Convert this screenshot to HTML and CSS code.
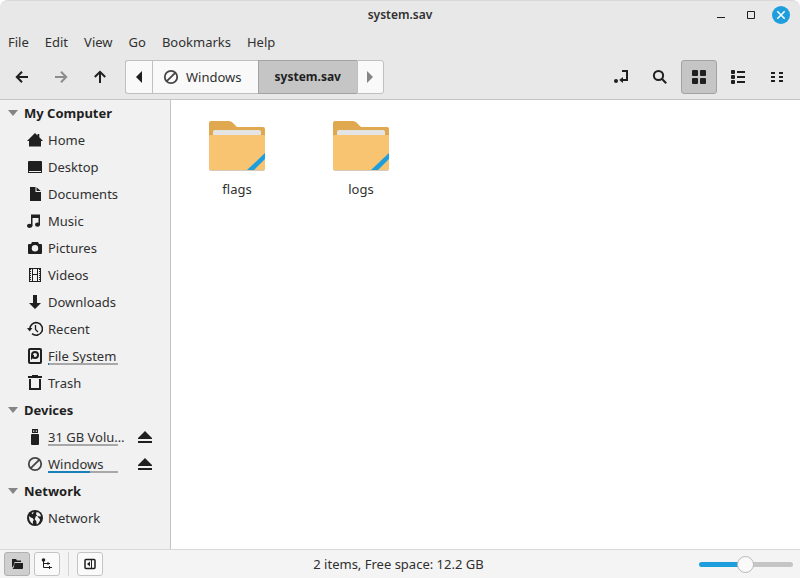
FILE: index.html
```html
<!DOCTYPE html>
<html lang="en">
<head>
<meta charset="utf-8">
<title>system.sav</title>
<link rel="stylesheet" href="styles.css">
</head>
<body>
<div class="window">
  <header class="chrome">
    <div class="titlebar">
      <h1 class="title">system.sav</h1>
      <div class="window-buttons">
        <button class="window-button" aria-label="Minimize"><svg width="18" height="18"><path d="M5 11.5h8" stroke="#1f1f1f"/></svg></button>
        <button class="window-button" aria-label="Maximize"><svg width="18" height="18"><path d="M5.500 5.500h7v7h-7z" stroke="#1f1f1f" fill="none"/></svg></button>
        <button class="window-button" aria-label="Close"><svg width="18" height="18"><circle cx="9" cy="9" r="9" fill="#1f9ede"/><path d="M5.300 5.300l7.400 7.400M12.700 5.300l-7.400 7.400" stroke="#fff" stroke-width="1.500"/></svg></button>
      </div>
    </div>
    <nav class="menubar">
      <button class="menu">File</button>
      <button class="menu">Edit</button>
      <button class="menu">View</button>
      <button class="menu">Go</button>
      <button class="menu">Bookmarks</button>
      <button class="menu">Help</button>
    </nav>
    <div class="toolbar">
      <button class="tool" aria-label="Back"><svg class="icon" viewBox="0 0 16 16"><path d="M14 8H3.500M8 2.800L2.800 8L8 13.200" fill="none" stroke="#1f1f1f" stroke-width="2"/></svg></button>
      <button class="tool" aria-label="Forward" disabled><svg class="icon" viewBox="0 0 16 16"><path d="M2 8h10.500M8 2.800L13.200 8L8 13.200" fill="none" stroke="#8c8c8c" stroke-width="2"/></svg></button>
      <button class="tool" aria-label="Up"><svg class="icon" viewBox="0 0 16 16"><path d="M8 14V3.500M2.800 8L8 2.800L13.200 8" fill="none" stroke="#1f1f1f" stroke-width="2"/></svg></button>
      <div class="pathbar">
        <button class="crumb crumb-arrow" aria-label="Scroll left"><svg class="icon" viewBox="0 0 16 16"><path d="M11 2v12L5 8z" fill="#1f1f1f"/></svg></button>
        <button class="crumb"><svg class="icon" viewBox="0 0 16 16"><circle cx="8" cy="8" r="6.200" fill="none" stroke="#454545" stroke-width="1.800"/><path d="M12.200 3.800L3.800 12.200" stroke="#454545" stroke-width="1.800"/></svg>Windows</button>
        <button class="crumb crumb-current">system.sav</button>
        <button class="crumb crumb-arrow" aria-label="Scroll right"><svg class="icon" viewBox="0 0 16 16"><path d="M5 2v12l6-6z" fill="#858585"/></svg></button>
      </div>
      <div class="view-tools">
        <button class="tool" aria-label="Toggle location entry"><svg class="icon" viewBox="0 0 16 16"><path d="M9 2h5v9H8.500" fill="none" stroke="#1f1f1f" stroke-width="2"/><path d="M10 8v6L6.200 11z" fill="#1f1f1f"/><circle cx="3" cy="12" r="2" fill="#1f1f1f"/></svg></button>
        <button class="tool" aria-label="Search"><svg class="icon" viewBox="0 0 16 16"><circle cx="6.500" cy="6.500" r="4.600" fill="none" stroke="#1f1f1f" stroke-width="2"/><path d="M9.800 9.800l4.400 4.400" stroke="#1f1f1f" stroke-width="2"/></svg></button>
        <button class="tool tool-active" aria-label="Icon view"><svg class="icon" viewBox="0 0 16 16" fill="#1f1f1f"><rect x="1" y="1" width="6" height="6" rx="1"/><rect x="9" y="1" width="6" height="6" rx="1"/><rect x="1" y="9" width="6" height="6" rx="1"/><rect x="9" y="9" width="6" height="6" rx="1"/></svg></button>
        <button class="tool" aria-label="List view"><svg class="icon" viewBox="0 0 16 16" fill="#1f1f1f"><rect x="1" y="1" width="4" height="4" rx="1"/><rect x="1" y="6" width="4" height="4" rx="1"/><rect x="1" y="11" width="4" height="4" rx="1"/><path d="M7 2h8v2H7zM7 7h8v2H7zM7 12h8v2H7z"/></svg></button>
        <button class="tool" aria-label="Compact view"><svg class="icon" viewBox="0 0 16 16"><path d="M2 4h4M10 4h4M2 8h4M10 8h4M2 12h4M10 12h4" stroke="#1f1f1f" stroke-width="2"/></svg></button>
      </div>
    </div>
  </header>

  <div class="main">
    <aside class="sidebar">
      <h2 class="section"><svg class="expander" viewBox="0 0 10 6"><path d="M0 0h10L5 6z" fill="#858585"/></svg>My Computer</h2>
      <a class="place" href="#"><svg class="icon" viewBox="0 0 16 16"><path d="M8 1l2.500 2.500V2h1.800v3.300L16 9h-2v5.500H2V9H0z" fill="#1f1f1f"/></svg><span class="place-name">Home</span></a>
      <a class="place" href="#"><svg class="icon" viewBox="0 0 16 16"><path fill-rule="evenodd" d="M2 2h12q1 0 1 1v11H1V3q0-1 1-1zM2 12v1h12v-1z" fill="#1f1f1f"/></svg><span class="place-name">Desktop</span></a>
      <a class="place" href="#"><svg class="icon" viewBox="0 0 16 16"><path d="M3 1h5.500v5H14v9H3zM9.500 1.200L13.800 5H9.500z" fill="#1f1f1f"/></svg><span class="place-name">Documents</span></a>
      <a class="place" href="#"><svg class="icon" viewBox="0 0 16 16" fill="#1f1f1f"><path d="M4 1.500h9V12h-1.500V5h-6v8H4z"/><ellipse cx="2.700" cy="12.800" rx="2.700" ry="2.100"/><ellipse cx="10.500" cy="11.700" rx="2.500" ry="2.100"/></svg><span class="place-name">Music</span></a>
      <a class="place" href="#"><svg class="icon" viewBox="0 0 16 16"><path d="M5 2h6l1 2h2q1 0 1 1v8q0 1-1 1H2q-1 0-1-1V5q0-1 1-1h2z" fill="#1f1f1f"/><circle cx="8" cy="8.300" r="3.200" fill="#f1f1f1"/></svg><span class="place-name">Pictures</span></a>
      <a class="place" href="#"><svg class="icon" viewBox="0 0 16 16" fill="none" stroke="#1f1f1f"><path d="M2.500 1v14M13.500 1v14M5.500 1v14M10.500 1v14M2 1.500h12M5 7.500h6M2 14.500h12"/><path d="M3.500 2v12M12.500 2v12" stroke-dasharray="1 1"/></svg><span class="place-name">Videos</span></a>
      <a class="place" href="#"><svg class="icon" viewBox="0 0 16 16"><path d="M6 1h4v8h4l-6 6-6-6h4z" fill="#1f1f1f"/></svg><span class="place-name">Downloads</span></a>
      <a class="place" href="#"><svg class="icon" viewBox="0 0 16 16"><path d="M2.800 8A6.300 6.300 0 1 1 5 12.700" fill="none" stroke="#1f1f1f" stroke-width="1.600"/><path d="M0 7h5.400L2.700 10.500z" fill="#1f1f1f"/><path d="M8.500 4v4.500l2.500 2.500" fill="none" stroke="#1f1f1f" stroke-width="1.300"/></svg><span class="place-name">Recent</span></a>
      <a class="place" href="#"><svg class="icon" viewBox="0 0 16 16"><rect x="2" y="1" width="12" height="14" rx="1" fill="none" stroke="#1f1f1f" stroke-width="2"/><circle cx="8" cy="7" r="3" fill="none" stroke="#1f1f1f" stroke-width="2"/><path d="M4 7h3v2l-3 3z" fill="#1f1f1f"/></svg><span class="place-name">File System<span class="usage"><span class="usage-fill" style="width:2%"></span></span></span></a>
      <a class="place" href="#"><svg class="icon" viewBox="0 0 16 16"><path d="M1 1h4V0h6v1h4v2H1z" fill="#1f1f1f"/><path d="M3 4v10h10V4" fill="none" stroke="#1f1f1f" stroke-width="2"/></svg><span class="place-name">Trash</span></a>

      <h2 class="section"><svg class="expander" viewBox="0 0 10 6"><path d="M0 0h10L5 6z" fill="#858585"/></svg>Devices</h2>
      <div class="device">
        <a class="place" href="#"><svg class="icon" viewBox="0 0 16 16" fill="#1f1f1f"><path fill-rule="evenodd" d="M5 0h6v4H5zM6 1.500v1.200h1.300V1.500zM8.700 1.500v1.200H10V1.500z"/><rect x="4" y="5" width="8" height="11" rx="1"/></svg><span class="place-name">31 GB Volu…<span class="usage"></span></span></a>
        <button class="eject" aria-label="Eject 31 GB Volume"><svg class="icon" viewBox="0 0 16 16"><path d="M8 2l7 7v1H1V9zM1 12h14v2H1z" fill="#1f1f1f"/></svg></button>
      </div>
      <div class="device">
        <a class="place" href="#"><svg class="icon" viewBox="0 0 16 16"><circle cx="8" cy="8" r="6.200" fill="none" stroke="#454545" stroke-width="1.800"/><path d="M12.200 3.800L3.800 12.200" stroke="#454545" stroke-width="1.800"/></svg><span class="place-name">Windows<span class="usage"><span class="usage-fill" style="width:60%"></span></span></span></a>
        <button class="eject" aria-label="Eject Windows"><svg class="icon" viewBox="0 0 16 16"><path d="M8 2l7 7v1H1V9zM1 12h14v2H1z" fill="#1f1f1f"/></svg></button>
      </div>

      <h2 class="section"><svg class="expander" viewBox="0 0 10 6"><path d="M0 0h10L5 6z" fill="#858585"/></svg>Network</h2>
      <a class="place" href="#"><svg class="icon" viewBox="0 0 16 16"><circle cx="8" cy="8" r="8" fill="#1f1f1f"/><path d="M9.500 2l2.500.8 2 2.700-.8 1.300-1.700-.8-1.200.8 1.700 1.200 1.200 2-1.700 3.200-1.700 1.300-.6-3.500-1.400-1.500.8-3 1.700-1-1.300-1zM1.800 6l2 1.500 2 .8 1 1.700-1 1.800.3 2.200-2-1.200-1.600-2.600zM4.500 3l2.300-1.200-1 2.500z" fill="#f1f1f1"/></svg><span class="place-name">Network</span></a>
    </aside>

    <main class="files">
      <a class="file" href="#">
        <svg class="folder" viewBox="0 0 56 50"><path d="M2 0h18q2 0 3.500 1.500L28 6h26q2 0 2 2v12H0V2q0-2 2-2z" fill="#e0a94f"/><path d="M0 15q2-2 4-1v3H0zM56 15q-2-2-4-1v3h4z" fill="#b9873a"/><path d="M6 9h44q2 0 2 2v6H4v-6q0-2 2-2z" fill="#e4e4e4"/><path d="M0 17v31q0 2 2 2h52q2 0 2-2V17z" fill="#d5c9b9"/><path d="M0 15q0-1 1-1h54q1 0 1 1v32q0 2-2 2H2q-2 0-2-2z" fill="#f8c471"/><path d="M56 32v6L45 49h-7z" fill="#1f9ede"/></svg>
        <span>flags</span>
      </a>
      <a class="file" href="#">
        <svg class="folder" viewBox="0 0 56 50"><path d="M2 0h18q2 0 3.500 1.500L28 6h26q2 0 2 2v12H0V2q0-2 2-2z" fill="#e0a94f"/><path d="M0 15q2-2 4-1v3H0zM56 15q-2-2-4-1v3h4z" fill="#b9873a"/><path d="M6 9h44q2 0 2 2v6H4v-6q0-2 2-2z" fill="#e4e4e4"/><path d="M0 17v31q0 2 2 2h52q2 0 2-2V17z" fill="#d5c9b9"/><path d="M0 15q0-1 1-1h54q1 0 1 1v32q0 2-2 2H2q-2 0-2-2z" fill="#f8c471"/><path d="M56 32v6L45 49h-7z" fill="#1f9ede"/></svg>
        <span>logs</span>
      </a>
    </main>
  </div>

  <footer class="statusbar">
    <div class="pane-buttons">
      <button class="pane-button pane-active" aria-label="Show places"><svg class="small-icon" viewBox="0 0 12 12"><path d="M1 1h4l1 1.500h4V4H3.500L2.500 8 1 9.500z" fill="#1f1f1f"/><path d="M3.500 5H12v5q0 1-1 1H1.500L3 9z" fill="#1f1f1f"/></svg></button>
      <button class="pane-button" aria-label="Show treeview"><svg class="small-icon" viewBox="0 0 12 12"><circle cx="2.500" cy="2" r="1.800" fill="#1f1f1f"/><path d="M2.500 2v7.500H6M2.500 5.500H6M6 5.500h3M6 9.500h5M7 4v3M8.500 8v3" fill="none" stroke="#1f1f1f"/></svg></button>
      <span class="divider"></span>
      <button class="pane-button" aria-label="Hide sidebar"><svg class="small-icon" viewBox="0 0 12 12"><rect x="1" y="1.500" width="10" height="9" rx="1" fill="none" stroke="#1f1f1f" stroke-width="1.500"/><path d="M6 3.500v5L3 6z" fill="#1f1f1f"/><path d="M7.500 2v8" stroke="#1f1f1f"/></svg></button>
    </div>
    <p class="status">2 items, Free space: 12.2 GB</p>
    <input class="zoom" type="range" min="0" max="100" value="49" aria-label="Zoom level">
  </footer>
</div>
</body>
</html>
```
FILE: styles.css
```css
* {
  box-sizing: border-box;
}

body {
  margin: 0;
  background: #fff;
  color: #303030;
  font: 13px/20px "Noto Sans", "Open Sans", sans-serif;
}

button {
  margin: 0;
  padding: 0;
  border: 0;
  background: none;
  color: inherit;
  font: inherit;
}

a {
  color: inherit;
  text-decoration: none;
}

svg {
  display: block;
  flex: none;
}

.icon {
  width: 16px;
  height: 16px;
}

.window {
  display: flex;
  flex-direction: column;
  min-height: 100vh;
}

/* Title, menus and toolbar */
.chrome {
  border-top: 1px solid #d9d9d9;
  border-bottom: 1px solid #c4c4c4;
  border-radius: 8px 8px 0 0;
  background: #e8e8e8;
}

.titlebar {
  display: grid;
  grid-template-columns: 1fr auto 1fr;
  align-items: center;
  height: 27px;
  padding: 0 10px;
}

.title {
  grid-column: 2;
  margin: 0;
  font-size: 12px;
  font-weight: 600;
}

.window-buttons {
  display: flex;
  justify-content: flex-end;
  gap: 12px;
}

.menubar {
  display: flex;
  height: 28px;
}

.menu {
  padding: 0 8px;
}

.toolbar {
  display: flex;
  align-items: center;
  gap: 3px;
  height: 43px;
  padding: 0 5px 2px 4px;
}

.tool {
  display: flex;
  align-items: center;
  justify-content: center;
  width: 36px;
  height: 34px;
  border-radius: 3px;
}

.tool-active {
  border: 1px solid #a3a3a3;
  background: #c5c5c5;
}

.pathbar {
  display: flex;
  height: 34px;
  margin-left: 4px;
}

.crumb {
  display: flex;
  align-items: center;
  gap: 7px;
  padding: 0 16px 0 10px;
  border: 1px solid #c0c0c0;
  border-right-width: 0;
  background: #f9f9f9;
}

.crumb-arrow {
  justify-content: center;
  width: 27px;
  padding: 0;
}

.crumb:first-child {
  border-radius: 3px 0 0 3px;
}

.crumb:last-child {
  border-right-width: 1px;
  border-radius: 0 3px 3px 0;
}

.crumb-current {
  padding: 0 16px;
  border-color: #a3a3a3;
  background: #c5c5c5;
  color: #1f1f1f;
  font-size: 12px;
  font-weight: 700;
}

.view-tools {
  display: flex;
  gap: 3px;
  margin-left: auto;
}

/* Places and files */
.main {
  display: flex;
  flex: 1;
}

.sidebar {
  flex: none;
  width: 171px;
  border-right: 1px solid #c4c4c4;
  background: #f1f1f1;
}

.section {
  display: flex;
  align-items: center;
  gap: 6px;
  height: 27px;
  margin: 0;
  padding-left: 8px;
  color: #1f1f1f;
  font-size: 13px;
  font-weight: 700;
}

.section:first-child {
  height: 26px;
}

.expander {
  width: 10px;
  height: 6px;
}

.place {
  display: flex;
  align-items: center;
  gap: 5px;
  height: 27px;
  padding-left: 27px;
}

.place-name {
  position: relative;
  white-space: nowrap;
}

.usage {
  position: absolute;
  bottom: 1px;
  left: 0;
  width: 70px;
  height: 2px;
  background: #a8a8a8;
}

.usage-fill {
  display: block;
  height: 2px;
  background: #1c80b8;
}

.device {
  display: flex;
  align-items: center;
  justify-content: space-between;
  padding-right: 17px;
}

.files {
  display: flex;
  flex: 1;
  flex-wrap: wrap;
  align-content: flex-start;
  padding: 21px 4px;
  background: #fff;
}

.file {
  display: flex;
  flex-direction: column;
  align-items: center;
  gap: 8px;
  width: 124px;
}

.folder {
  width: 56px;
  height: 50px;
}

/* Status bar */
.statusbar {
  display: grid;
  grid-template-columns: 1fr auto 1fr;
  align-items: center;
  height: 29px;
  padding: 0 7px 0 4px;
  border-top: 1px solid #d9d9d9;
  background: #f4f4f4;
}

.pane-buttons {
  display: flex;
  gap: 4px;
}

.pane-button {
  display: flex;
  align-items: center;
  justify-content: center;
  width: 26px;
  height: 24px;
  border: 1px solid #c4c4c4;
  border-radius: 3px;
  background: #fafafa;
}

.pane-active {
  border-color: #b0b0b0;
  background: #cfcfcf;
}

.small-icon {
  width: 12px;
  height: 12px;
}

.divider {
  width: 1px;
  margin: 0 4px;
  background: #d4d4d4;
}

.status {
  margin: 0;
}

.zoom {
  justify-self: end;
  width: 94px;
  height: 18px;
  margin: 0;
  background: none;
  appearance: none;
}

.zoom::-webkit-slider-runnable-track {
  height: 5px;
  border-radius: 3px;
  background: linear-gradient(to right, #1f9ede 49%, #c5c5c5 49%);
}

.zoom::-webkit-slider-thumb {
  width: 17px;
  height: 17px;
  margin-top: -6px;
  border: 1px solid #b8b8b8;
  border-radius: 50%;
  background: #fafafa;
  appearance: none;
}
```
